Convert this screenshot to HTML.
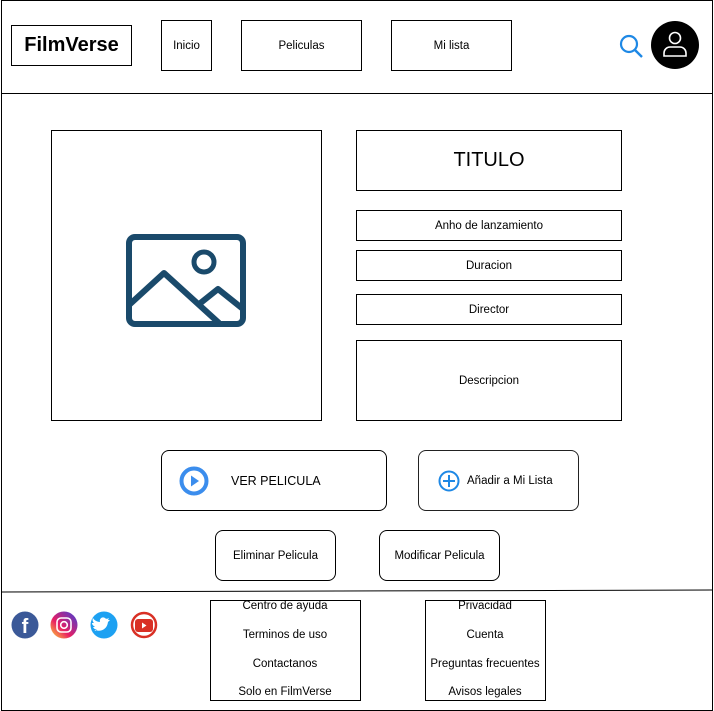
<!DOCTYPE html>
<html><head><style>
body{margin:0;width:714px;height:711px;position:relative;font-family:"Liberation Sans",sans-serif;background:#fff;overflow:hidden}
.b{position:absolute;border:1px solid #000;box-sizing:border-box;display:flex;align-items:center;justify-content:center;font-size:12px;color:#000}
.r{border-radius:8px}
.h{position:absolute;background:#000}
.f{position:absolute;font-size:11.5px;width:150px;text-align:center}
</style></head><body>
<div class="h" style="left:1px;top:0;width:1px;height:711px"></div>
<div class="h" style="left:712px;top:0;width:1px;height:711px"></div>
<div class="h" style="left:1px;top:0;width:712px;height:1px"></div>
<div class="h" style="left:1px;top:710px;width:712px;height:1px"></div>
<div class="h" style="left:1px;top:93px;width:712px;height:1px"></div>
<svg style="position:absolute;left:0;top:588px" width="714" height="6"><line x1="1" y1="4" x2="713" y2="2" stroke="#000" stroke-width="1"/></svg>

<div class="b" style="left:11px;top:25px;width:121px;height:41px;font-size:20px;font-weight:bold">FilmVerse</div>
<div class="b" style="left:161px;top:20px;width:51px;height:51px;font-size:11.5px">Inicio</div>
<div class="b" style="left:241px;top:20px;width:121px;height:51px;font-size:11.5px">Peliculas</div>
<div class="b" style="left:391px;top:20px;width:121px;height:51px;font-size:11.5px">Mi lista</div>
<svg style="position:absolute;left:618px;top:33px" width="26" height="26"><circle cx="11" cy="11" r="8" fill="none" stroke="#1e88e5" stroke-width="2.2"/><line x1="17" y1="17" x2="24" y2="24" stroke="#1e88e5" stroke-width="2.4"/></svg>
<svg style="position:absolute;left:650px;top:20px" width="50" height="50"><circle cx="25" cy="25" r="24" fill="#000"/><circle cx="25" cy="18" r="5.5" fill="none" stroke="#fff" stroke-width="1.6"/><path d="M14 36 v-3 a6 6 0 0 1 6 -6 h10 a6 6 0 0 1 6 6 v3 z" fill="none" stroke="#fff" stroke-width="1.6"/></svg>

<div class="b" style="left:51px;top:130px;width:271px;height:291px"></div>
<svg style="position:absolute;left:125px;top:233px" width="122" height="95"><rect x="4" y="4" width="114" height="87" rx="6" fill="none" stroke="#1a4a6b" stroke-width="6"/><circle cx="79" cy="29" r="10" fill="none" stroke="#1a4a6b" stroke-width="5"/><path d="M4 72 L39 40 L94 90 M73 72 L93 56 L118 76" fill="none" stroke="#1a4a6b" stroke-width="6" stroke-linejoin="round"/></svg>

<div class="b" style="left:356px;top:130px;width:266px;height:61px;font-size:20px">TITULO</div>
<div class="b" style="left:356px;top:210px;width:266px;height:31px;font-size:11.5px">Anho de lanzamiento</div>
<div class="b" style="left:356px;top:250px;width:266px;height:31px;font-size:11.5px">Duracion</div>
<div class="b" style="left:356px;top:294px;width:266px;height:31px;font-size:11.5px">Director</div>
<div class="b" style="left:356px;top:340px;width:266px;height:81px;font-size:11.5px">Descripcion</div>

<div class="b r" style="left:161px;top:450px;width:226px;height:61px;justify-content:flex-start">
<svg style="margin-left:17px" width="30" height="30"><circle cx="15" cy="15" r="12.5" fill="none" stroke="#3b8ded" stroke-width="4"/><path d="M12 9.5 L20 15 L12 20.5 Z" fill="#3b8ded"/></svg>
<span style="margin-left:22px;font-size:12.5px">VER PELICULA</span></div>
<div class="b r" style="left:418px;top:450px;width:161px;height:61px;justify-content:flex-start;border-color:#222">
<svg style="margin-left:19px" width="22" height="22"><circle cx="11" cy="11" r="9.5" fill="none" stroke="#1e88e5" stroke-width="2"/><path d="M11 5v12M5 11h12" stroke="#1e88e5" stroke-width="2"/></svg>
<span style="margin-left:7px;font-size:11.5px">Añadir a Mi Lista</span></div>
<div class="b r" style="left:215px;top:530px;width:121px;height:51px;font-size:11.5px">Eliminar Pelicula</div>
<div class="b r" style="left:379px;top:530px;width:121px;height:51px;font-size:11.5px">Modificar Pelicula</div>

<svg style="position:absolute;left:11px;top:611px" width="150" height="30">
<circle cx="14" cy="14" r="13.5" fill="#3b5998"/><text x="14" y="22" font-family="Liberation Sans" font-weight="bold" font-size="20" fill="#fff" text-anchor="middle">f</text>
<defs><linearGradient id="ig" x1="0" y1="1" x2="1" y2="0"><stop offset="0" stop-color="#fdd835"/><stop offset=".4" stop-color="#e91e63"/><stop offset="1" stop-color="#3f3fd8"/></linearGradient></defs>
<circle cx="53" cy="14" r="13.5" fill="url(#ig)"/><rect x="46" y="7" width="14" height="14" rx="4" fill="none" stroke="#fff" stroke-width="1.6"/><circle cx="53" cy="14" r="3.3" fill="none" stroke="#fff" stroke-width="1.6"/>
<circle cx="93" cy="14" r="13.5" fill="#1da1f2"/><path d="M84 19 c5 2 12 0 13-8 l2-2 l-2 0 l1-2 c-2 1-3 1-4 0 c-3-2-6 1-5 4 c-3 0-6-2-7-4 c-1 2 0 4 1 5 l-2 0 c0 2 2 3 3 4 l-2 0 c1 2 2 2 4 3 c-1 1-3 1-2 0z" fill="#fff"/>
<circle cx="133" cy="14" r="12" fill="none" stroke="#d93025" stroke-width="2.5"/><rect x="124" y="8" width="18" height="13" rx="3" fill="#d93025"/><path d="M131 11.5 L135.5 14.5 L131 17.5Z" fill="#fff"/>
</svg>

<div class="b" style="left:210px;top:600px;width:151px;height:101px"></div>
<div class="f" style="left:210px;top:600px">Centro de ayuda</div>
<div class="f" style="left:210px;top:629px">Terminos de uso</div>
<div class="f" style="left:210px;top:658px">Contactanos</div>
<div class="f" style="left:210px;top:686px">Solo en FilmVerse</div>
<div class="b" style="left:425px;top:600px;width:121px;height:101px"></div>
<div class="f" style="left:410px;top:600px">Privacidad</div>
<div class="f" style="left:410px;top:629px">Cuenta</div>
<div class="f" style="left:410px;top:658px">Preguntas frecuentes</div>
<div class="f" style="left:410px;top:686px">Avisos legales</div>
</body></html>
